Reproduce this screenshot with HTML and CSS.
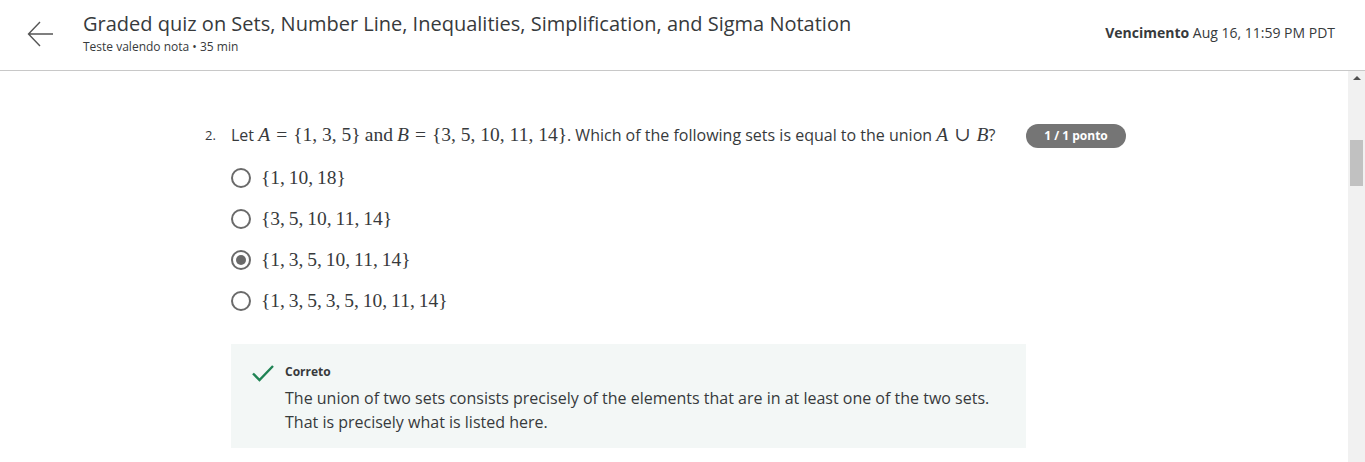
FILE: index.html
```html
<!DOCTYPE html>
<html lang="pt">
<head>
<meta charset="utf-8">
<title>Graded quiz</title>
<link rel="stylesheet" href="styles.css">
</head>
<body>
<header class="topbar">
  <div class="back">
    <svg width="28" height="28" viewBox="0 0 28 28" aria-hidden="true"><path d="M26 14H2M13 2L1.5 14 13 26" fill="none" stroke="#555" stroke-width="1.4"/></svg>
  </div>
  <div class="titles">
    <h1 class="title">Graded quiz on Sets, Number Line, Inequalities, Simplification, and Sigma Notation</h1>
    <div class="subtitle">Teste valendo nota • 35 min</div>
  </div>
  <div class="due"><b>Vencimento</b> Aug 16, 11:59 PM PDT</div>
</header>
<div class="page">
  <main class="content">
    <section class="question">
      <div class="qnum">2.</div>
      <div class="qbody">
        <p class="qtext">Let <span class="m"><i>A</i><span class="rel">=</span>{1, 3, 5}</span> <span class="m">and</span> <span class="m"><i>B</i><span class="rel">=</span>{3, 5, 10, 11, 14}</span>. Which of the following sets is equal to the union <span class="m"><i>A</i><span class="rel">∪</span><i>B</i></span>?</p>
        <ul class="options">
          <li class="opt"><span class="radio"></span><span class="m set">{1, 10, 18}</span></li>
          <li class="opt"><span class="radio"></span><span class="m set">{3, 5, 10, 11, 14}</span></li>
          <li class="opt"><span class="radio checked"></span><span class="m set">{1, 3, 5, 10, 11, 14}</span></li>
          <li class="opt"><span class="radio"></span><span class="m set">{1, 3, 5, 3, 5, 10, 11, 14}</span></li>
        </ul>
        <div class="feedback">
          <svg class="check" width="24" height="20" viewBox="0 0 24 20" aria-hidden="true"><path d="M2 10.5L8.5 17 22 3" fill="none" stroke="#1f8354" stroke-width="2.4"/></svg>
          <div class="fbtext">
            <div class="fblabel">Correto</div>
            <p>The union of two sets consists precisely of the elements that are in at least one of the two sets.<br>That is precisely what is listed here.</p>
          </div>
        </div>
      </div>
      <div class="badgecol"><span class="badge">1 / 1 ponto</span></div>
    </section>
  </main>
  <div class="scrollbar">
    <div class="arrow"></div>
    <div class="thumb"></div>
  </div>
</div>
</body>
</html>
```

FILE: styles.css
```css
* { box-sizing: border-box; }
html, body { margin: 0; padding: 0; }
body {
  font-family: "Open Sans", "Noto Sans", sans-serif;
  color: #373a3c;
  background: #fff;
  width: 1365px;
  height: 462px;
  overflow: hidden;
}
.topbar {
  height: 71px;
  border-bottom: 1px solid #c8c8c8;
  display: flex;
  align-items: flex-start;
  padding: 0 30px 0 27px;
}
.back { width: 56px; padding-top: 20px; }
.back svg { display: block; }
.titles { flex: 1; padding-top: 10px; }
.title {
  margin: 0;
  font-size: 20px;
  font-weight: 400;
  line-height: 28px;
  color: #373a3c;
}
.subtitle { font-size: 12px; line-height: 16px; color: #373a3c; margin-top: 1px; }
.due { font-size: 14px; padding-top: 23px; color: #373a3c; }
.due b { font-weight: 700; }
.page { display: flex; height: 391px; }
.content { flex: 1; padding: 50px 0 0 205px; }
.question { display: flex; align-items: flex-start; }
.qnum { width: 26px; font-size: 13px; line-height: 28px; }
.qbody { width: 795px; }
.qtext { margin: 0; font-size: 16px; line-height: 28px; white-space: nowrap; }
.m { font-family: "Liberation Serif", "DejaVu Serif", serif; font-size: 19.5px; }
.m i { font-style: italic; }
.rel { margin: 0 6px; }
.set { word-spacing: -1px; }
.options { list-style: none; margin: 8px 0 0; padding: 0; }
.opt { display: flex; align-items: center; height: 41px; }
.radio {
  width: 20px; height: 20px;
  border: 2px solid #6a6a6a;
  border-radius: 50%;
  margin-right: 10px;
  display: flex; align-items: center; justify-content: center;
}
.radio.checked::after {
  content: "";
  width: 10px; height: 10px;
  border-radius: 50%;
  background: #6a6a6a;
}
.feedback {
  margin-top: 23px;
  background: #f3f7f6;
  height: 104px;
  display: flex;
  align-items: flex-start;
  padding: 19px 0 0 20px;
}
.check { margin-top: 0; margin-right: 10px; flex: none; }
.fblabel { font-size: 12px; font-weight: 700; line-height: 18px; color: #373a3c; }
.fbtext p { margin: 5px 0 0; font-size: 16px; line-height: 24px; }
.badgecol { padding-left: 0; padding-top: 2px; }
.badge {
  display: inline-block;
  width: 100px; height: 24px;
  border-radius: 12px;
  background: #757575;
  color: #fff;
  font-size: 12px;
  font-weight: 700;
  text-align: center;
  line-height: 24px;
}
.scrollbar { width: 17px; background: #f1f1f1; display: flex; flex-direction: column; align-items: center; }
.arrow {
  margin-top: 5px;
  width: 0; height: 0;
  border-left: 4px solid transparent;
  border-right: 4px solid transparent;
  border-bottom: 4px solid #505050;
}
.thumb { margin-top: 60px; width: 13px; height: 46px; background: #c1c1c1; }
```
